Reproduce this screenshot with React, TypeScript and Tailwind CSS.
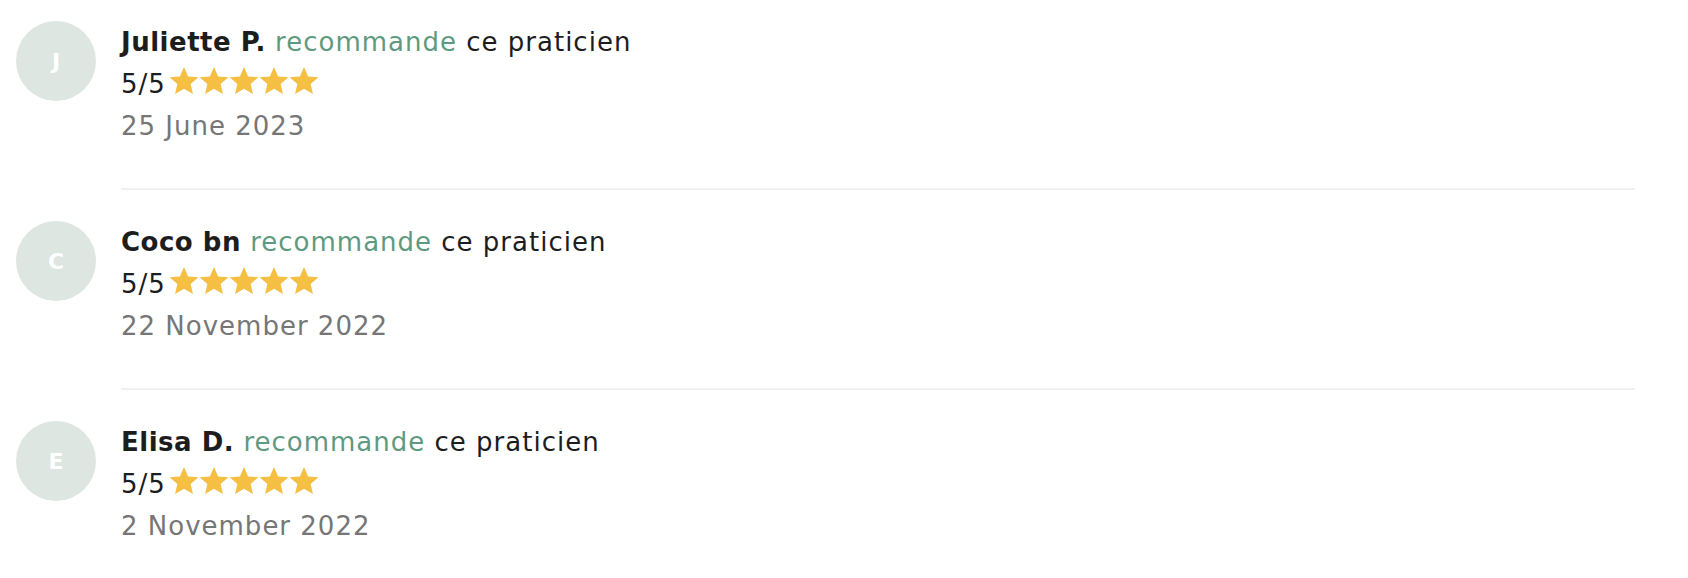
import React from 'react';

type Review = { initial: string; name: string; date: string };

const reviews: Review[] = [
  { initial: 'J', name: 'Juliette P.', date: '25 June 2023' },
  { initial: 'C', name: 'Coco bn', date: '22 November 2022' },
  { initial: 'E', name: 'Elisa D.', date: '2 November 2022' },
];

const Star: React.FC = () => (
  <svg viewBox="0 0 24 24" className="w-[30px] h-[30px]" aria-hidden="true">
    <path
      fill="#f4bf42"
      d="M12 0.8l3.3 7.5 8.2.7-6.2 5.4 1.9 8L12 18.2l-7.2 4.2 1.9-8L.5 9l8.2-.7z"
    />
  </svg>
);

const ReviewItem: React.FC<{ review: Review; first: boolean; last: boolean }> = ({ review, first, last }) => (
  <div className={`flex gap-[25px] ${first ? 'pt-[21px]' : 'pt-[31px]'}`}>
    <div className="w-20 h-20 shrink-0 rounded-full bg-[#dde6e1] flex items-center justify-center text-white text-[22px] font-bold">
      {review.initial}
    </div>
    <div className={`flex-1 tracking-[1px] text-[26px] ${last ? 'pb-[41px]' : 'pb-[41px] border-b-2 border-[#f0f0f0]'}`}>
      <div className="leading-[42px] text-[#1d1d1d]">
        <span className="font-bold tracking-[0.5px]">{review.name}</span>{' '}
        <span className="text-[#5f9a80]">recommande</span> ce praticien
      </div>
      <div className="flex items-center leading-[42px] text-[#1d1d1d]">
        <span className="mr-[3px]">5/5</span>
        <span className="flex items-center -mt-[6px]">
          {[0, 1, 2, 3, 4].map((i) => (
            <Star key={i} />
          ))}
        </span>
      </div>
      <div className="leading-[42px] text-[#767676]">{review.date}</div>
    </div>
  </div>
);

export default function App() {
  return (
    <div className="w-[1688px] h-[578px] bg-white pl-4 pr-[53px] font-['DejaVu_Sans',sans-serif]">
      {reviews.map((r, i) => (
        <ReviewItem key={r.name} review={r} first={i === 0} last={i === reviews.length - 1} />
      ))}
    </div>
  );
}
